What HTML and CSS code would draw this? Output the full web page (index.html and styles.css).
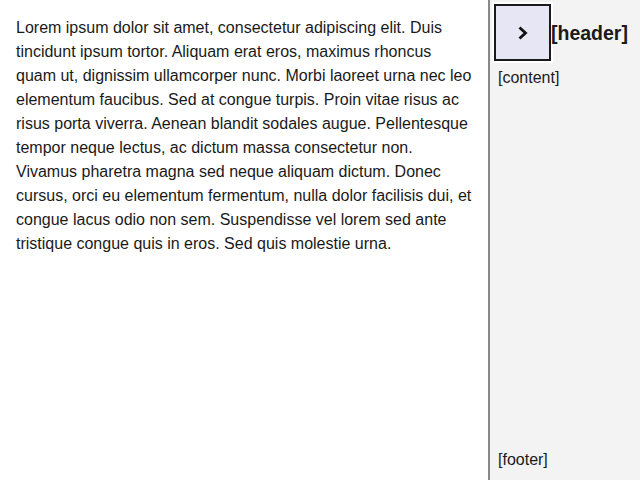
FILE: index.html
```html
<!DOCTYPE html>
<html>
<head>
<meta charset="utf-8">
<link rel="stylesheet" href="styles.css">
</head>
<body>
<div class="layout">
  <main class="main">
    <p class="text">Lorem ipsum dolor sit amet, consectetur adipiscing elit. Duis tincidunt ipsum tortor. Aliquam erat eros, maximus rhoncus quam ut, dignissim ullamcorper nunc. Morbi laoreet urna nec leo elementum faucibus. Sed at congue turpis. Proin vitae risus ac risus porta viverra. Aenean blandit sodales augue. Pellentesque tempor neque lectus, ac dictum massa consectetur non. Vivamus pharetra magna sed neque aliquam dictum. Donec cursus, orci eu elementum fermentum, nulla dolor facilisis dui, et congue lacus odio non sem. Suspendisse vel lorem sed ante tristique congue quis in eros. Sed quis molestie urna.</p>
  </main>
  <aside class="sidebar">
    <div class="side-header">
      <button class="toggle" type="button" aria-label="Toggle">
        <svg width="12" height="14" viewBox="0 0 12 14"><polyline points="2.5,1.5 8.5,7 2.5,12.5" fill="none" stroke="#111" stroke-width="2.8"/></svg>
      </button>
      <span class="header-label">[header]</span>
    </div>
    <div class="side-content">[content]</div>
    <div class="side-footer">[footer]</div>
  </aside>
</div>
</body>
</html>
```
FILE: styles.css
```css
html, body {
  margin: 0;
  padding: 0;
  height: 100%;
}
body {
  font-family: "Liberation Sans", Arial, sans-serif;
  color: #1a1a1a;
  background: #fff;
}
.layout {
  display: grid;
  grid-template-columns: 488px 1fr;
  height: 480px;
}
.main {
  padding: 16px;
}
.text {
  margin: 0;
  font-size: 16px;
  line-height: 24px;
}
.sidebar {
  background: #f3f3f3;
  border-left: 2px solid #888;
  display: flex;
  flex-direction: column;
}
.side-header {
  display: flex;
  align-items: center;
  padding: 4px 0 0 4px;
}
.toggle {
  width: 57px;
  height: 57px;
  box-sizing: border-box;
  border: 2px solid #1a1a1a;
  background: #e6e6f4;
  box-shadow: 0 0 0 2px #fff;
  padding: 0;
  margin: 0;
  display: flex;
  align-items: center;
  justify-content: center;
}
.toggle svg {
  display: block;
}
.header-label {
  font-size: 19.5px;
  font-weight: bold;
  margin-left: 0;
  margin-top: 2px;
}
.side-content {
  flex: 1;
  padding: 8px 8px;
  font-size: 16px;
  line-height: 18px;
}
.side-footer {
  padding: 0 8px 11px;
  font-size: 16px;
  line-height: 18px;
}
```
